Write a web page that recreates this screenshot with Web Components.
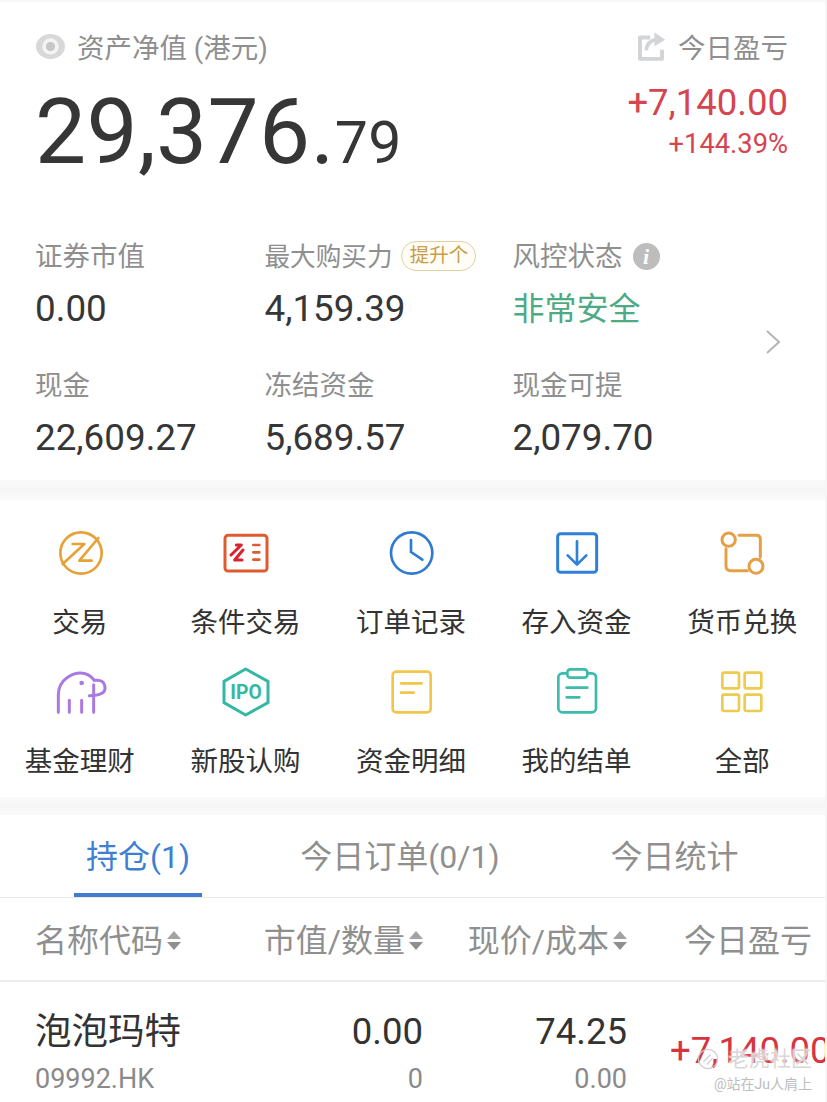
<!doctype html>
<html lang="zh">
<head>
<meta charset="utf-8">
<title>账户</title>
<style>
	html, body { margin: 0; background: #fff; }
	body { font-family: Roboto, "Noto Sans CJK SC", sans-serif; color: #333; overflow: hidden; }
	svg { display: block; overflow: visible; }
</style>
</head>
<body>
<fin-app>
	<fin-summary label="资产净值 (港元)" whole="29,376." cents="79" pl-label="今日盈亏" pl="+7,140.00" pl-rate="+144.39%"></fin-summary>

	<fin-metrics>
		<fin-metric><span slot="label">证券市值</span>0.00</fin-metric>
		<fin-metric>
			<span slot="label" style="font-size: 25.6px">最大购买力</span>
			<fin-badge slot="extra">提升个</fin-badge>
			4,159.39
		</fin-metric>
		<fin-metric tone="safe">
			<span slot="label">风控状态</span>
			<fin-info slot="extra"></fin-info>
			非常安全
		</fin-metric>
		<fin-metric><span slot="label">现金</span>22,609.27</fin-metric>
		<fin-metric><span slot="label">冻结资金</span>5,689.57</fin-metric>
		<fin-metric><span slot="label">现金可提</span>2,079.70</fin-metric>
	</fin-metrics>

	<fin-band></fin-band>

	<fin-actions>
		<fin-action label="交易">
			<svg slot="icon" width="50" height="48" viewBox="105 43 150 144" fill="none" stroke="#e6a238" stroke-width="8" stroke-linecap="round" stroke-linejoin="round">
				<circle cx="183" cy="115" r="62"/>
				<path d="M158 88h35l-65 60"/>
				<path d="M235 70l-57 68h37"/>
			</svg>
		</fin-action>
		<fin-action label="条件交易">
			<svg slot="icon" width="50" height="48" viewBox="601 42 150 144" fill="none" stroke-linecap="round" stroke-linejoin="round">
				<rect x="616" y="61" width="126" height="107" rx="9" stroke="#e05a30" stroke-width="9"/>
				<path d="M650 90h15l-31 30" stroke="#d8232e" stroke-width="9"/>
				<path d="M670 105l-25 30h22" stroke="#d8232e" stroke-width="9"/>
				<path d="M701 90h18M701 112h18M701 134h18" stroke="#e05a30" stroke-width="8"/>
			</svg>
		</fin-action>
		<fin-action label="订单记录">
			<svg slot="icon" width="50" height="48" viewBox="108 43 150 144" fill="none" stroke="#2f7bd0" stroke-width="8" stroke-linecap="round" stroke-linejoin="round">
				<circle cx="185" cy="115" r="62"/>
				<path d="M183 76v36l34 23"/>
			</svg>
		</fin-action>
		<fin-action label="存入资金">
			<svg slot="icon" width="50" height="48" viewBox="605 43 150 144" fill="none" stroke-linecap="round" stroke-linejoin="round">
				<rect x="622" y="57" width="117" height="116" rx="9" stroke="#2f80d8" stroke-width="9"/>
				<path d="M680 80v68M652 122l28 28 28-28" stroke="#2f80d8" stroke-width="8"/>
			</svg>
		</fin-action>
		<fin-action label="货币兑换">
			<svg slot="icon" width="50" height="48" viewBox="170 43 150 144" fill="none" stroke="#e5a047" stroke-width="9" stroke-linecap="round" stroke-linejoin="round">
				<circle cx="205" cy="75" r="20"/>
				<circle cx="287" cy="155" r="21"/>
				<path d="M236 62h52q12 0 12 12v54"/>
				<path d="M197 102v52q0 14 14 14h50"/>
			</svg>
		</fin-action>
		<fin-action label="基金理财">
			<svg slot="icon" width="56" height="48" viewBox="96 455 168 144" fill="none" stroke="#aa7ae0" stroke-width="9" stroke-linecap="round" stroke-linejoin="round">
				<path d="M115 588v-52q0-34 26-52 20-14 40-14 26 0 42 22"/>
				<path d="M223 492q32-4 32 24 0 22-47 22"/>
				<path d="M148 552v36M185 552v36M221 505v83"/>
				<circle cx="185" cy="500" r="7" fill="#aa7ae0" stroke="none"/>
			</svg>
		</fin-action>
		<fin-action label="新股认购">
			<svg slot="icon" width="50" height="48" viewBox="601 459 150 144" fill="none">
				<path d="M678 462l67 37v64l-67 37-65-37v-64z" stroke="#34b8a4" stroke-width="9" stroke-linejoin="round"/>
				<text x="679" y="552" text-anchor="middle" font-family="Roboto, sans-serif" font-weight="700" font-size="58" fill="#34b8a4">IPO</text>
			</svg>
		</fin-action>
		<fin-action label="资金明细">
			<svg slot="icon" width="50" height="48" viewBox="108 459 150 144" fill="none" stroke="#f3c64a" stroke-width="8" stroke-linecap="round" stroke-linejoin="round">
				<rect x="128" y="470" width="114" height="122" rx="11"/>
				<path d="M153 505h62M153 533h38"/>
			</svg>
		</fin-action>
		<fin-action label="我的结单">
			<svg slot="icon" width="50" height="48" viewBox="606 459 150 144" fill="none" stroke="#3cbcaa" stroke-width="8" stroke-linecap="round" stroke-linejoin="round">
				<rect x="625" y="475" width="113" height="117" rx="12"/>
				<rect x="652" y="463" width="60" height="25" rx="9" fill="#fff"/>
				<path d="M650 518h62M650 547h38"/>
			</svg>
		</fin-action>
		<fin-action label="全部">
			<svg slot="icon" width="50" height="48" viewBox="172 461 150 144" fill="none" stroke="#eccb50" stroke-width="8" stroke-linejoin="round">
				<rect x="188" y="475" width="50" height="47" rx="5"/>
				<rect x="255" y="475" width="50" height="47" rx="5"/>
				<rect x="188" y="541" width="50" height="49" rx="5"/>
				<rect x="255" y="541" width="50" height="49" rx="5"/>
			</svg>
		</fin-action>
	</fin-actions>

	<fin-band short></fin-band>

	<fin-tabs active="0" items="持仓(1)|今日订单(0/1)|今日统计"></fin-tabs>

	<fin-holdings-head>
		<fin-sort-label sortable>名称代码</fin-sort-label>
		<fin-sort-label sortable>市值/数量</fin-sort-label>
		<fin-sort-label sortable>现价/成本</fin-sort-label>
		<fin-sort-label>今日盈亏</fin-sort-label>
	</fin-holdings-head>

	<fin-holding-row name="泡泡玛特" code="09992.HK" value="0.00" qty="0" price="74.25" cost="0.00" pl="+7,140.00"></fin-holding-row>

	<fin-watermark brand="老虎社区" user="@站在Ju人肩上"></fin-watermark>
</fin-app>

<script>
	// small helper, every element below has a static template and an open root
	function define(tag, html, Base = HTMLElement) {
		const tpl = document.createElement('template');
		tpl.innerHTML = html;
		customElements.define(tag, class extends Base {
			constructor() {
				super();
				this.attachShadow({ mode: 'open' }).appendChild(tpl.content.cloneNode(true));
			}
			connectedCallback() {
				if (this.render) this.render();
			}
		});
	}

	// fills [data-attr] nodes of the shadow root from the host attributes
	class Bound extends HTMLElement {
		render() {
			this.shadowRoot.querySelectorAll('[data-attr]').forEach((el) => {
				el.textContent = this.getAttribute(el.dataset.attr) || '';
			});
		}
	}

	define('fin-app', `
		<style>
			:host {
				display: block;
				position: relative;
				width: 825px;
				height: 1100px;
				overflow: hidden;
				background: #fff;
				border-top: 2px solid #f7f7f7;
				border-right: 2px solid #f6f6f6;
			}
		</style>
		<slot></slot>
	`);

	define('fin-summary', `
		<style>
			:host { display: flex; justify-content: space-between; height: 234px; box-sizing: border-box; padding: 24px 37px 0 35px; }
			.label { display: flex; align-items: center; gap: 12px; height: 40px; font-size: 27.5px; color: #8f8f8f; }
			.label svg { margin-left: 1px; }
			.total { font-size: 91px; line-height: 100px; margin-top: 16px; color: #363636; letter-spacing: 0.3px; white-space: nowrap; }
			.total small { font-size: 59px; }
			.side { text-align: right; }
			.side .label { justify-content: flex-end; }
			.pl { font-size: 36.5px; line-height: 44px; color: #d5444f; margin-top: 15px; }
			.rate { font-size: 27.3px; line-height: 34px; color: #d5444f; margin-top: 2px; }
		</style>
		<div>
			<div class="label">
				<svg width="29" height="25" viewBox="0 0 29 25"><ellipse cx="14.5" cy="12.5" rx="14.5" ry="12.5" fill="#d8d8d8"/><circle cx="14.5" cy="12.5" r="8.2" fill="#f4f4f4"/><circle cx="14.5" cy="12.5" r="4.6" fill="#c6c6c6"/></svg>
				<span data-attr="label"></span>
			</div>
			<div class="total"><span data-attr="whole"></span><small data-attr="cents"></small></div>
		</div>
		<div class="side">
			<div class="label">
				<svg width="29" height="30" viewBox="672 94 88 90" fill="none" stroke="#d2d4d7" stroke-linejoin="round"><path d="M712 113h-31v65h67v-28" stroke-width="12"/><path d="M700 152q2-28 32-33" stroke-width="11"/><path d="M725 98l33 22-33 20z" fill="#d2d4d7" stroke="none"/></svg>
				<span data-attr="pl-label"></span>
			</div>
			<div class="pl" data-attr="pl"></div>
			<div class="rate" data-attr="pl-rate"></div>
		</div>
	`, Bound);

	define('fin-metrics', `
		<style>
			:host { display: grid; position: relative; grid-template-columns: 229.5px 248px 1fr; row-gap: 34px; padding: 0 0 20px 35px; }
			svg { position: absolute; right: 44px; top: 93px; }
		</style>
		<slot></slot>
		<svg width="16" height="26" viewBox="0 0 16 26" fill="none" stroke="#b4b4b4" stroke-width="2"><path d="M2 2l12 11L2 24"/></svg>
	`);

	define('fin-metric', `
		<style>
			:host { display: block; }
			.label { display: flex; align-items: center; height: 40px; font-size: 27.5px; color: #8f8f8f; }
			/* the CJK face sits low in its line box, lift it to the badge's centre */
			::slotted([slot="label"]) { margin-bottom: 4px; }
			.value { margin-top: 11px; font-size: 36.8px; line-height: 44px; color: #363636; white-space: nowrap; }
			:host([tone="safe"]) .value { font-size: 32px; color: #4cab82; }
		</style>
		<div class="label"><slot name="label"></slot><slot name="extra"></slot></div>
		<div class="value"><slot></slot></div>
	`);

	define('fin-badge', `
		<style>
			:host {
				display: inline-block;
				box-sizing: border-box;
				width: 75px;
				height: 30px;
				margin-left: 9px;
				border: 1px solid #e4d0a2;
				border-radius: 15px;
				background: #fffdf6;
				color: #c79e47;
				font-size: 19.5px;
				line-height: 27px;
				text-align: center;
				white-space: nowrap;
			}
		</style>
		<slot></slot>
	`);

	define('fin-info', `
		<style>
			:host {
				display: inline-block;
				width: 27px;
				height: 27px;
				margin-left: 10px;
				border-radius: 50%;
				background: #bdbdbd;
				color: #fff;
				font: italic 700 22px/27px "Liberation Serif", serif;
				text-align: center;
			}
		</style>
		i
	`);

	define('fin-band', `
		<style>
			:host { display: block; height: 20px; background: linear-gradient(#fafafa, #f6f6f6 50%, #fafafa); }
			:host([short]) { height: 18px; }
		</style>
	`);

	define('fin-actions', `
		<style>
			:host {
				display: grid;
				grid-template-columns: repeat(5, 165.6px);
				row-gap: 25.5px;
				margin-left: -3px;
				padding: 29px 0 16px;
			}
		</style>
		<slot></slot>
	`);

	define('fin-action', `
		<style>
			:host { display: flex; flex-direction: column; align-items: center; }
			.icon { display: flex; align-items: center; justify-content: center; height: 48px; }
			.label { margin-top: 26px; margin-bottom: -1px; font-size: 27.5px; line-height: 40px; color: #333; white-space: nowrap; }
		</style>
		<div class="icon"><slot name="icon"></slot></div>
		<div class="label" data-attr="label"></div>
	`, Bound);

	class TabsBase extends HTMLElement {
		render() {
			const active = Number(this.getAttribute('active') || 0);
			const root = this.shadowRoot.querySelector('.tabs');
			(this.getAttribute('items') || '').split('|').forEach((text, i) => {
				const cell = document.createElement('div');
				cell.className = i === active ? 'tab on' : 'tab';
				const inner = document.createElement('span');
				inner.textContent = text;
				cell.appendChild(inner);
				root.appendChild(cell);
			});
		}
	}
	define('fin-tabs', `
		<style>
			:host { display: block; border-bottom: 1px solid #e9e9e9; }
			.tabs { display: grid; grid-template-columns: 276px 248px 1fr; height: 82px; }
			.tab { display: flex; justify-content: center; font-size: 32px; color: #8f8f8f; }
			.tab span { box-sizing: border-box; height: 82px; padding-top: 21px; line-height: 42px; white-space: nowrap; }
			.tab.on { color: #3f7fd2; }
			.tab.on span { width: 128px; text-align: center; border-bottom: 4px solid #4279d2; }
		</style>
		<div class="tabs"></div>
	`, TabsBase);

	define('fin-holdings-head', `
		<style>
			:host {
				display: grid;
				box-sizing: content-box;
				grid-template-columns: 230px 158px 204px 1fr;
				align-items: center;
				height: 78px;
				padding: 4px 13px 0 35px;
				border-bottom: 2px solid #ededed;
			}
			::slotted(:not(:first-child)) { justify-self: end; }
		</style>
		<slot></slot>
	`);

	define('fin-sort-label', `
		<style>
			:host { display: inline-flex; align-items: center; gap: 4px; font-size: 32px; line-height: 44px; color: #8f8f8f; white-space: nowrap; }
			svg { display: none; }
			:host([sortable]) svg { display: block; }
		</style>
		<slot></slot>
		<svg width="14" height="19" viewBox="0 0 14 19" fill="#8f8f8f"><path d="M7 0l7 8H0z" fill="#a3a3a3"/><path d="M0 11h14l-7 8z"/></svg>
	`);

	define('fin-holding-row', `
		<style>
			:host {
				display: grid;
				grid-template-columns: 230px 158px 204px 1fr;
				grid-template-rows: 50px 40px;
				row-gap: 2px;
				padding: 25px 0 0 35px;
				white-space: nowrap;
			}
			.main { font-size: 36.5px; line-height: 50px; color: #333; }
			.sub { font-size: 27px; line-height: 40px; color: #8a8a8a; }
			.end { text-align: right; }
			.pl { grid-column: 4; grid-row: 1 / 3; align-self: center; padding: 0 0 4px 43px; font-size: 36.5px; color: #d7343f; }
		</style>
		<div class="main" data-attr="name"></div>
		<div class="main end" data-attr="value"></div>
		<div class="main end" data-attr="price"></div>
		<div class="pl" data-attr="pl"></div>
		<div class="sub" data-attr="code"></div>
		<div class="sub end" data-attr="qty"></div>
		<div class="sub end" data-attr="cost"></div>
	`, Bound);

	define('fin-watermark', `
		<style>
			:host { position: absolute; right: 13px; bottom: 8px; display: flex; flex-direction: column; align-items: flex-end; color: #c8c8c8; white-space: nowrap; }
			.brand { display: flex; align-items: center; gap: 8px; font-size: 21px; line-height: 30px; color: rgba(210, 210, 210, 0.9); text-shadow: 0 0 2px #fff, 0 0 3px #fff; }
			.brand svg { margin-right: 1px; }
			.user { font-size: 14px; line-height: 20px; color: #bdbdbd; text-shadow: 0 0 2px #fff; }
		</style>
		<div class="brand">
			<svg width="22" height="22" viewBox="0 0 24 24" fill="none" stroke="rgba(205,205,205,0.9)" stroke-width="1.5"><circle cx="12" cy="12" r="10.5"/><path d="M7 15l8-8M11 18l6-7"/></svg>
			<span data-attr="brand"></span>
		</div>
		<div class="user" data-attr="user"></div>
	`, Bound);
</script>
</body>
</html>
